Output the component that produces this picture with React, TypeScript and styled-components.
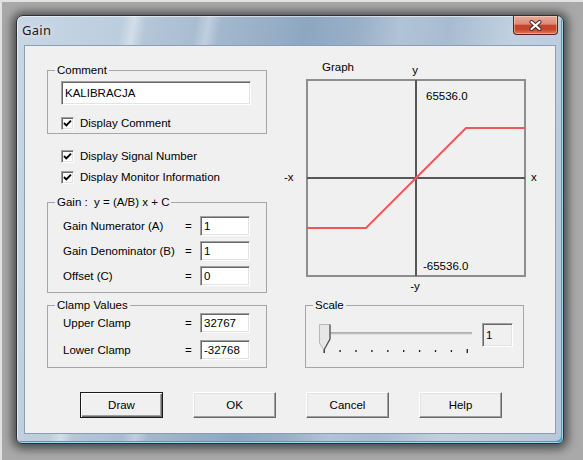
import React from "react";
import styled, { createGlobalStyle, css } from "styled-components";

const FONT = `"Liberation Sans", Arial, sans-serif`;

const GlobalStyle = createGlobalStyle`
  html, body { margin: 0; padding: 0; }
  body { background: #a8a8a8; font-family: ${FONT}; color: #000; }
`;

const Desktop = styled.div`
  box-sizing: border-box;
  width: 583px;
  height: 460px;
  overflow: hidden;
  padding: 13px 0 0 14px;
  border-top: 2px solid #e2e2e2;
  border-left: 2px solid #e2e2e2;
  background: #a9a9a9;
`;

const Window = styled.div`
  box-sizing: border-box;
  width: 548px;
  height: 429px;
  border: 1px solid #2b3136;
  border-radius: 7px 7px 6px 6px;
  padding: 0 7px 9px 7px;
  display: flex;
  flex-direction: column;
  background: linear-gradient(
    100deg,
    #c9d7e5 0%,
    #bccddd 17%,
    #d3dee9 19%,
    #b4c6d8 21%,
    #a9bdd2 29%,
    #c0cfde 31%,
    #a3b8ce 33%,
    #8ea7c1 47%,
    #98afc7 55%,
    #b1c3d6 62%,
    #a8bcd1 70%,
    #c1d0df 80%,
    #b7c8da 100%
  );
  box-shadow: 0 1px 10px 4px rgba(0, 0, 0, 0.55),
    inset 0 0 0 1px rgba(255, 255, 255, 0.55),
    inset -2px -2px 0 #34a2d6;
`;

const TitleBar = styled.div`
  height: 29px;
  margin: 0 -7px;
  display: flex;
  align-items: flex-start;
  justify-content: space-between;
`;

const Title = styled.span`
  padding-left: 5px;
  font: 13px/29px "Noto Sans", "Liberation Sans", sans-serif;
  letter-spacing: 0.3px;
  color: #1b1b1b;
  text-shadow: 0 0 6px rgba(255, 255, 255, 0.9);
`;

const CloseButton = styled.div`
  box-sizing: border-box;
  width: 45px;
  height: 19px;
  margin-right: 5px;
  border: 1px solid #5e2218;
  border-top: none;
  border-radius: 0 0 4px 4px;
  background: linear-gradient(
    180deg,
    #e9ab9b 0%,
    #d98a76 45%,
    #c4452c 52%,
    #c8462c 75%,
    #e07a5a 100%
  );
  box-shadow: inset 0 0 0 1px rgba(255, 255, 255, 0.35);
  display: flex;
  align-items: center;
  justify-content: center;
`;

const Client = styled.div`
  flex: 1;
  background: #f0f0f0;
  border: 1px solid #8c9eb3;
  display: flex;
  flex-direction: column;
  font-size: 11.5px;
`;

const Main = styled.div`
  display: flex;
  height: 322px;
  padding-left: 22px;
`;

const LeftCol = styled.div`
  width: 220px;
  padding-top: 17px;
  display: flex;
  flex-direction: column;
`;

const RightCol = styled.div`
  width: 270px;
  margin-left: 13px;
  padding-top: 12px;
  display: flex;
  flex-direction: column;
`;

const Group = styled.fieldset<{ $mt?: number; $ml?: number; $w?: number }>`
  box-sizing: border-box;
  margin: ${(p) => p.$mt ?? 0}px 0 0 ${(p) => p.$ml ?? 0}px;
  padding: 0;
  min-width: 0;
  width: ${(p) => (p.$w ? `${p.$w}px` : "auto")};
  border: 1px solid #a6a6a6;
`;

const Legend = styled.legend`
  margin-left: 7px;
  padding: 0 2px;
  font-size: 11.5px;
  line-height: 14px;
`;

const GroupBody = styled.div<{ $pt: number; $pb: number; $pl: number; $gap?: number; $row?: boolean }>`
  display: flex;
  flex-direction: ${(p) => (p.$row ? "row" : "column")};
  align-items: flex-start;
  gap: ${(p) => p.$gap ?? 0}px;
  padding: ${(p) => p.$pt}px 0 ${(p) => p.$pb}px ${(p) => p.$pl}px;
`;

const sunken = css`
  border: 1px solid;
  border-color: #a0a0a0 #ffffff #ffffff #a0a0a0;
  box-shadow: inset 1px 1px 0 #696969, inset -1px -1px 0 #e3e3e3;
`;

const Edit = styled.div<{ $w: number; $h: number; $disabled?: boolean; $mt?: number }>`
  box-sizing: border-box;
  width: ${(p) => p.$w}px;
  height: ${(p) => p.$h}px;
  margin-top: ${(p) => p.$mt ?? 0}px;
  ${sunken};
  background: ${(p) => (p.$disabled ? "#f0f0f0" : "#ffffff")};
  padding-left: 3px;
  display: flex;
  align-items: center;
  font-size: 11.5px;
  white-space: nowrap;
`;

const CheckRow = styled.div<{ $mt?: number; $pl?: number }>`
  display: flex;
  align-items: center;
  gap: 6px;
  height: 14px;
  margin-top: ${(p) => p.$mt ?? 0}px;
  padding-left: ${(p) => p.$pl ?? 0}px;
  white-space: nowrap;
`;

const CheckBox = styled.span`
  box-sizing: border-box;
  width: 13px;
  height: 13px;
  ${sunken};
  background: #fff;
  display: flex;
  align-items: center;
  justify-content: center;
`;

const FormRow = styled.div`
  display: grid;
  grid-template-columns: 122px 15px 50px;
  align-items: center;
  height: 20px;
  white-space: nowrap;
`;

const Eq = styled.span`
  padding-left: 0;
`;

const Scale = styled.div`
  display: flex;
  align-items: flex-start;
  gap: 6px;
`;

const ButtonRow = styled.div`
  display: flex;
  gap: 30px;
  padding: 24px 0 0 55px;
`;

const Button = styled.button<{ $default?: boolean }>`
  box-sizing: border-box;
  width: 83px;
  height: 26px;
  padding: 0;
  font: 11.5px ${FONT};
  color: #000;
  background: #f0f0f0;
  border: 1px solid;
  border-color: #ffffff #696969 #696969 #ffffff;
  box-shadow: inset -1px -1px 0 #a0a0a0, inset 1px 1px 0 #e3e3e3;
  ${(p) =>
    p.$default &&
    css`
      border: 1px solid #1a1a1a;
      box-shadow: inset 1px 1px 0 #ffffff, inset -1px -1px 0 #696969,
        inset -2px -2px 0 #a0a0a0;
    `}
`;

const Check = () => (
  <CheckBox>
    <svg width="9" height="9" viewBox="0 0 9 9">
      <polyline points="1,4 3.3,6.4 8,1.6" fill="none" stroke="#000" strokeWidth="1.9" />
    </svg>
  </CheckBox>
);

const CloseGlyph = () => (
  <svg width="13" height="11" viewBox="0 0 13 11">
    <g strokeLinecap="round">
      <path d="M2.5 2 L10.5 9 M10.5 2 L2.5 9" stroke="#3a2a28" strokeWidth="4" />
      <path d="M2.5 2 L10.5 9 M10.5 2 L2.5 9" stroke="#ffffff" strokeWidth="2.2" />
    </g>
  </svg>
);

const Graph = () => (
  <svg width="270" height="239" viewBox="0 0 270 239" style={{ display: "block" }}>
    <g fontFamily={FONT} fontSize="11.5" fill="#000">
      <text x="42" y="13">Graph</text>
      <text x="135" y="16" textAnchor="middle">y</text>
      <text x="146" y="42">65536.0</text>
      <text x="143" y="212">-65536.0</text>
      <text x="135" y="232" textAnchor="middle">-y</text>
      <text x="4" y="123">-x</text>
      <text x="251" y="123">x</text>
    </g>
    <rect x="27" y="22" width="218" height="196" fill="none" stroke="#8e8e8e" strokeWidth="2" />
    <line x1="136" y1="22" x2="136" y2="218" stroke="#575757" strokeWidth="2" />
    <line x1="27" y1="120" x2="245" y2="120" stroke="#575757" strokeWidth="2" />
    <polyline points="27,170 86,170 186,70 245,70" fill="none" stroke="#f05858" strokeWidth="2" />
  </svg>
);

const Slider = () => {
  const ticks = Array.from({ length: 10 }, (_, i) => 6 + i * 15.9);
  return (
    <svg width="158" height="32" viewBox="0 0 158 32" style={{ display: "block" }}>
      <line x1="12" y1="11" x2="154" y2="11" stroke="#6c6c6c" strokeWidth="1" />
      <line x1="12" y1="12" x2="154" y2="12" stroke="#cfcfcf" strokeWidth="1" />
      {ticks.map((x, i) => (
        <rect
          key={i}
          x={x - 0.5}
          y={i === 0 || i === 9 ? 27 : 28}
          width="1.4"
          height={i === 0 || i === 9 ? 4 : 2}
          fill="#2a2a2a"
        />
      ))}
      <polygon points="1.5,2.5 12,2.5 12,17 6,28 1.5,21" fill="#e7e7e7" stroke="#b8b8b8" strokeWidth="1" />
      <polyline points="12,2.5 12,17 6,28" fill="none" stroke="#4e4e4e" strokeWidth="1.2" />
    </svg>
  );
};

export default function App() {
  return (
    <>
      <GlobalStyle />
      <Desktop>
        <Window>
          <TitleBar>
            <Title>Gain</Title>
            <CloseButton>
              <CloseGlyph />
            </CloseButton>
          </TitleBar>
          <Client>
            <Main>
              <LeftCol>
                <Group>
                  <Legend>Comment</Legend>
                  <GroupBody $pt={4} $pb={3} $pl={13}>
                    <Edit $w={190} $h={24}>KALIBRACJA</Edit>
                    <CheckRow $mt={11}>
                      <Check />
                      Display Comment
                    </CheckRow>
                  </GroupBody>
                </Group>
                <CheckRow $mt={15} $pl={14}>
                  <Check />
                  Display Signal Number
                </CheckRow>
                <CheckRow $mt={7} $pl={14}>
                  <Check />
                  Display Monitor Information
                </CheckRow>
                <Group $mt={11}>
                  <Legend>Gain :&nbsp; y = (A/B) x + C</Legend>
                  <GroupBody $pt={7} $pb={6} $pl={15} $gap={5}>
                    <FormRow>
                      <span>Gain Numerator (A)</span>
                      <Eq>=</Eq>
                      <Edit $w={50} $h={20}>1</Edit>
                    </FormRow>
                    <FormRow>
                      <span>Gain Denominator (B)</span>
                      <Eq>=</Eq>
                      <Edit $w={50} $h={20}>1</Edit>
                    </FormRow>
                    <FormRow>
                      <span>Offset (C)</span>
                      <Eq>=</Eq>
                      <Edit $w={50} $h={20}>0</Edit>
                    </FormRow>
                  </GroupBody>
                </Group>
                <Group $mt={5}>
                  <Legend>Clamp Values</Legend>
                  <GroupBody $pt={1} $pb={7} $pl={15} $gap={7}>
                    <FormRow>
                      <span>Upper Clamp</span>
                      <Eq>=</Eq>
                      <Edit $w={50} $h={20}>32767</Edit>
                    </FormRow>
                    <FormRow>
                      <span>Lower Clamp</span>
                      <Eq>=</Eq>
                      <Edit $w={50} $h={20}>-32768</Edit>
                    </FormRow>
                  </GroupBody>
                </Group>
              </LeftCol>
              <RightCol>
                <Graph />
                <Group $mt={1} $ml={25} $w={219}>
                  <Legend>Scale</Legend>
                  <GroupBody $pt={10} $pb={13} $pl={12} $row>
                    <Scale>
                      <Slider />
                      <Edit $w={31} $h={24} $mt={1} $disabled>1</Edit>
                    </Scale>
                  </GroupBody>
                </Group>
              </RightCol>
            </Main>
            <ButtonRow>
              <Button $default>Draw</Button>
              <Button>OK</Button>
              <Button>Cancel</Button>
              <Button>Help</Button>
            </ButtonRow>
          </Client>
        </Window>
      </Desktop>
    </>
  );
}
